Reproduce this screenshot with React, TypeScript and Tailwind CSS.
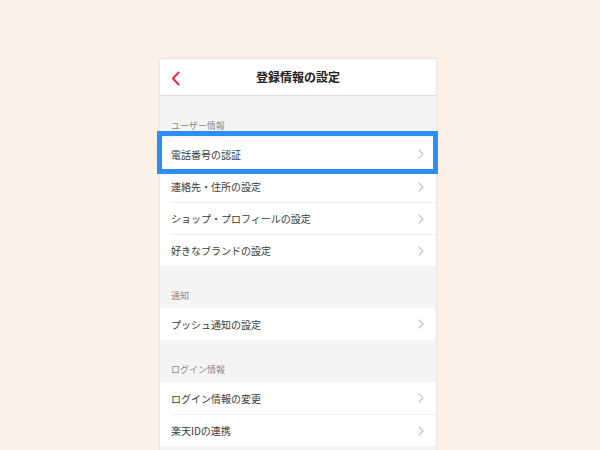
import React from "react";

const font = { fontFamily: '"Noto Sans CJK JP", "Noto Sans", sans-serif' };

function Chevron() {
  return (
    <svg width="6" height="10" viewBox="0 0 6 10" className="shrink-0">
      <path d="M1 1 L5 5 L1 9" fill="none" stroke="#c4c4c4" strokeWidth="1.1" strokeLinecap="round" strokeLinejoin="round" />
    </svg>
  );
}

function Row({ label, first, highlight }: { label: string; first?: boolean; highlight?: boolean }) {
  return (
    <div className="relative h-[32px] bg-white pl-[11px]">
      <div className={`flex h-full items-center pr-[12px] ${first ? "" : "border-t border-[#efefef]"}`}>
        <span className="flex-1 text-[10px] text-[#3a3a3a]">{label}</span>
        <Chevron />
      </div>
      {highlight && (
        <div className="pointer-events-none absolute z-10 left-[-3px] right-[-2px] top-[-7px] bottom-[-4px] border-[5px] border-[#2b8ff7]" />
      )}
    </div>
  );
}

function Section({ title }: { title: string }) {
  return (
    <div className="flex h-[42px] items-end bg-[#f4f4f4] pb-[6px] pl-[11px]">
      <span className="text-[9px] leading-[12px] text-[#8a8a8a]">{title}</span>
    </div>
  );
}

export default function App() {
  return (
    <div className="h-[450px] w-[600px] overflow-hidden bg-[#fdf1e8] pl-[160px] pt-[59px]" style={font}>
      <div className="w-[276px] h-[400px] bg-[#f4f4f4] shadow-[0_0_3px_rgba(0,0,0,0.12)]">
        <div className="relative flex h-[37px] items-center justify-center border-b border-[#dcdcdc] bg-white">
          <svg width="9" height="15" viewBox="0 0 9 15" className="absolute left-[11px] top-[12px]">
            <path d="M7.5 1.5 L2 7.5 L7.5 13.5" fill="none" stroke="#e8303a" strokeWidth="2" strokeLinecap="round" strokeLinejoin="round" />
          </svg>
          <span className="text-[12px] font-bold text-[#222222]">登録情報の設定</span>
        </div>
        <Section title="ユーザー情報" />
        <Row label="電話番号の認証" first highlight />
        <Row label="連絡先・住所の設定" />
        <Row label="ショップ・プロフィールの設定" />
        <Row label="好きなブランドの設定" />
        <Section title="通知" />
        <Row label="プッシュ通知の設定" first />
        <Section title="ログイン情報" />
        <Row label="ログイン情報の変更" first />
        <Row label="楽天IDの連携" />
      </div>
    </div>
  );
}
